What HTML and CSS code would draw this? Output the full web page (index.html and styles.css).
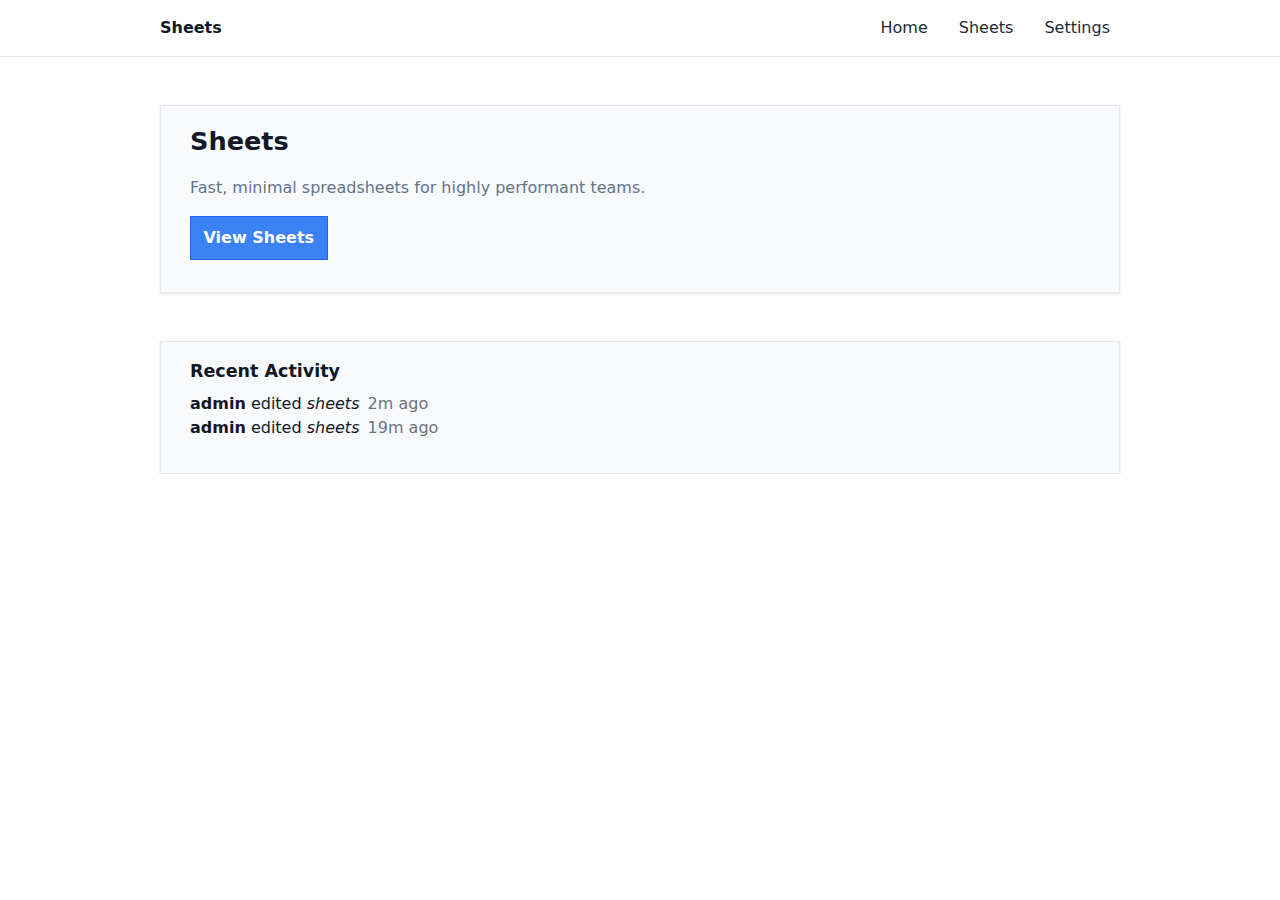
FILE: index.html
```html
<!DOCTYPE html>
<html lang="en">
<head>
  <meta charset="UTF-8" />
  <meta name="viewport" content="width=device-width, initial-scale=1.0" />
  <title>Sheets</title>
  <link rel="stylesheet" href="styles.css">
</head>
<body>

  <header class="topbar">
    <div class="container topbar-inner">
      <a class="brand" href="/">Sheets</a>
      <nav>
        <a href="/">Home</a>
        <a href="/sheets">Sheets</a>
        <a href="/settings">Settings</a>
      </nav>
    </div>
  </header>

  <main class="container">
    <section class="card hero">
      <h1>Sheets</h1>
      <p>Fast, minimal spreadsheets for highly performant teams.</p>
      <a class="btn" href="/sheets">View Sheets</a>
    </section>

    <section class="card activity">
      <h2>Recent Activity</h2>
      <ul>
        <li><b>admin</b> edited <i>sheets</i> <span class="time">2m ago</span></li>
        <li><b>admin</b> edited <i>sheets</i> <span class="time">19m ago</span></li>
      </ul>
    </section>
  </main>

</body>
</html>
```

FILE: styles.css
```css
:root {
  --text: #111827;
  --muted: #6b7280;
  --border: #e5e7eb;
  --card: #f8fafc;
  --blue: #3b82f6;
}

body {
  margin: 0;
  font-family: "DejaVu Sans", sans-serif;
  font-size: 16px;
  color: var(--text);
  background: #fff;
}

a {
  color: inherit;
  text-decoration: none;
}

.container {
  width: 960px;
  margin: 0 auto;
}

.topbar {
  height: 56px;
  border-bottom: 1px solid var(--border);
}

.topbar-inner {
  box-sizing: border-box;
  display: flex;
  align-items: center;
  justify-content: space-between;
  height: 100%;
  padding-bottom: 2px;
}

.brand {
  font-weight: bold;
}

nav {
  display: flex;
  gap: 11px;
}

nav a {
  padding: 0 10px;
  color: #1f2937;
}

main {
  padding-top: 48px;
  display: flex;
  flex-direction: column;
  gap: 48px;
}

.card {
  background: var(--card);
  border: 1px solid var(--border);
  box-shadow: 0 1px 3px rgba(0, 0, 0, 0.12);
  padding: 20px 29px 32px;
}

.hero h1 {
  margin: 0;
  font-size: 25.6px;
  line-height: 31px;
}

.hero p {
  margin: 19px 0 16px;
  line-height: 24px;
  color: #64748b;
}

.btn {
  display: inline-block;
  background: var(--blue);
  border: 1px solid #2563eb;
  color: #fff;
  font-weight: bold;
  padding: 0 12.5px;
  line-height: 42px;
}

.activity {
  padding-top: 18px;
  padding-bottom: 33px;
}

.activity h2 {
  margin: 0 0 10px;
  font-size: 17.5px;
  line-height: 22px;
}

.activity ul {
  list-style: none;
  margin: 0;
  padding: 0;
}

.activity li {
  line-height: 24px;
}

.time {
  color: var(--muted);
  margin-left: 3px;
}
```
